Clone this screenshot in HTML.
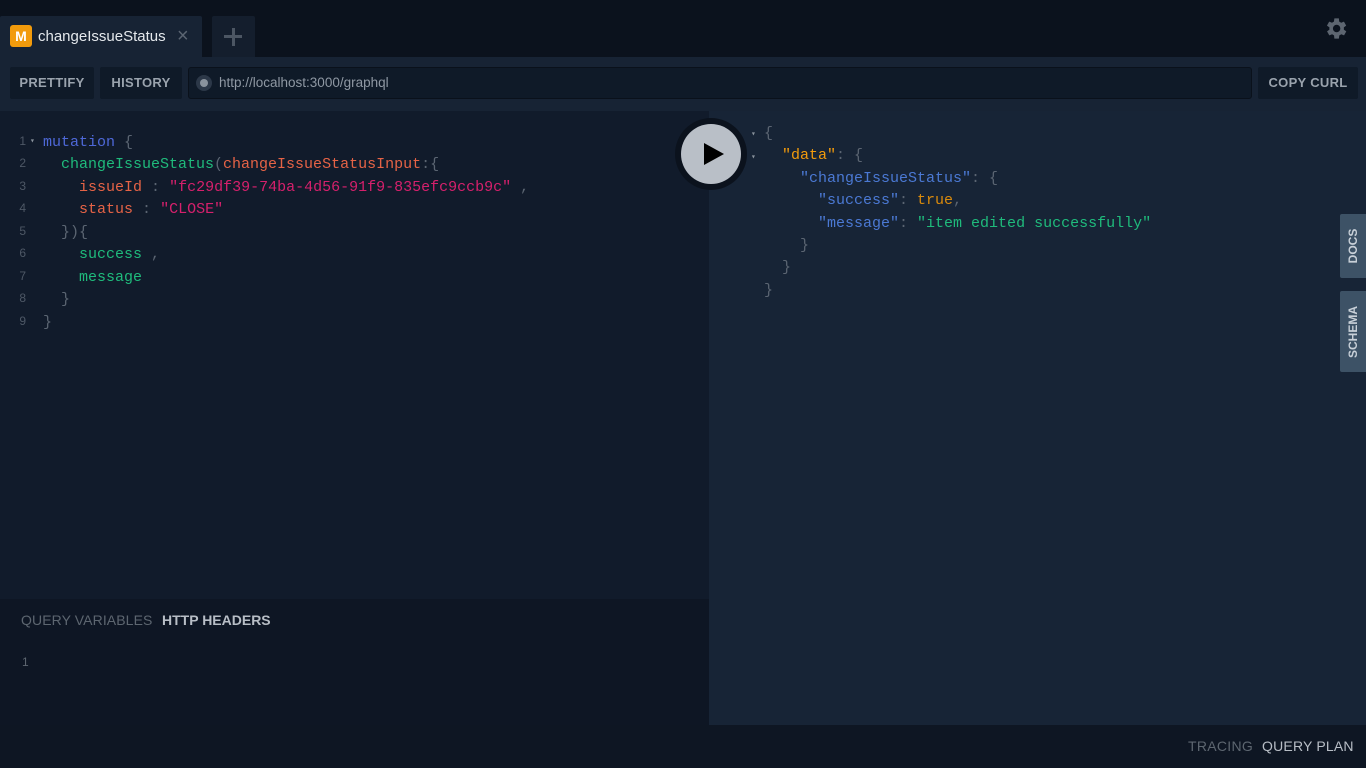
<!DOCTYPE html>
<html><head><meta charset="utf-8"><style>
*{margin:0;padding:0;box-sizing:border-box}
body{width:1366px;height:768px;overflow:hidden;background:#0b121d;font-family:"Liberation Sans",sans-serif;position:relative}
.abs{position:absolute}
.mono{font-family:"Liberation Mono",monospace;font-size:15px}
.btn{position:absolute;top:67px;height:32px;background:#0f1a28;border-radius:2px;color:#9aa3ad;font-weight:bold;font-size:13px;letter-spacing:.3px;line-height:32px;text-align:center}
.ln{position:absolute;left:8px;width:18px;text-align:right;color:#4e5866;font-size:12px;font-family:"Liberation Sans",sans-serif}
.cl{position:absolute;white-space:pre}
.side{position:absolute;left:1340px;width:26px;background:#3d5266;border-radius:2px 0 0 2px;color:#c8d0d8;font-size:12px;font-weight:bold}
.side span{position:absolute;left:50%;top:50%;transform:translate(-50%,-50%) rotate(-90deg);white-space:nowrap}
</style></head><body>
<div class="abs" style="left:0;top:16px;width:202px;height:42px;background:#172334;border-radius:2px 2px 0 0"></div>
<div class="abs" style="left:10px;top:25px;width:22px;height:22px;background:#f29b0c;border-radius:3px;color:#fff;font-weight:bold;font-size:14px;text-align:center;line-height:22px">M</div>
<div class="abs" style="left:38px;top:28px;color:#e4e8ec;font-size:15px">changeIssueStatus</div>
<div class="abs" style="left:177px;top:25px;color:#5b6572;font-size:20px">×</div>
<div class="abs" style="left:212px;top:16px;width:43px;height:42px;background:#141e2d;border-radius:2px 2px 0 0"></div>
<div class="abs" style="left:224px;top:35px;width:18px;height:3px;background:#4c5663"></div>
<div class="abs" style="left:231.5px;top:28px;width:3px;height:18px;background:#4c5663"></div>
<svg class="abs" style="left:1322px;top:15px" width="27" height="27" viewBox="0 0 24 24"><path fill="#5d6570" d="M19.4 13a7.6 7.6 0 0 0 0-2l2.1-1.6-2-3.5-2.5 1a7.3 7.3 0 0 0-1.7-1L15 3h-4l-.4 2.9a7.3 7.3 0 0 0-1.7 1l-2.5-1-2 3.5L6.6 11a7.6 7.6 0 0 0 0 2l-2.1 1.6 2 3.5 2.5-1a7.3 7.3 0 0 0 1.7 1L11 21h4l.4-2.9a7.3 7.3 0 0 0 1.7-1l2.5 1 2-3.5zM13 15.3A3.3 3.3 0 1 1 13 8.7a3.3 3.3 0 0 1 0 6.6z"/></svg>
<div class="abs" style="left:0;top:57px;width:1366px;height:54px;background:#172334"></div>
<div class="btn" style="left:10px;width:84px">PRETTIFY</div>
<div class="btn" style="left:100px;width:82px">HISTORY</div>
<div class="abs" style="left:188px;top:67px;width:1064px;height:32px;background:#0f1a28;border:1px solid #0a111b;border-radius:3px"></div>
<div class="abs" style="left:196px;top:75px;width:16px;height:16px;border-radius:50%;background:#2c3848"></div>
<div class="abs" style="left:200px;top:79px;width:8px;height:8px;border-radius:50%;background:#8a939d"></div>
<div class="abs" style="left:219px;top:75px;color:#8f98a3;font-size:13.5px">http://localhost:3000/graphql</div>
<div class="btn" style="left:1258px;width:100px">COPY CURL</div>
<div class="abs" style="left:0;top:111px;width:709px;height:488px;background:#111b2b"></div>
<div class="abs" style="left:709px;top:111px;width:657px;height:614px;background:#172436"></div>
<div class="abs" style="left:0;top:599px;width:709px;height:126px;background:#0e1624"></div>
<div class="abs" style="left:0;top:725px;width:1366px;height:43px;background:#0e1623"></div>
<div class="mono">
<div class="ln" style="top:134px">1</div><div class="ln" style="top:156px">2</div><div class="ln" style="top:179px">3</div><div class="ln" style="top:201px">4</div><div class="ln" style="top:224px">5</div><div class="ln" style="top:246px">6</div><div class="ln" style="top:269px">7</div><div class="ln" style="top:291px">8</div><div class="ln" style="top:314px">9</div>
<div class="cl" style="left:30px;top:136px;color:#8a939d;font-size:8px">▾</div>
<div class="cl" style="left:43px;top:134px;color:#4e68d8">mutation <span style="color:#5b6572">{</span></div>
<div class="cl" style="left:43px;top:156px;color:#1fbb7c">  changeIssueStatus<span style="color:#5b6572">(</span><span style="color:#e66346">changeIssueStatusInput</span><span style="color:#5b6572">:{</span></div>
<div class="cl" style="left:43px;top:179px;color:#e66346">    issueId <span style="color:#5b6572">:</span> <span style="color:#d6206c">"fc29df39-74ba-4d56-91f9-835efc9ccb9c"</span> <span style="color:#5b6572">,</span></div>
<div class="cl" style="left:43px;top:201px;color:#e66346">    status <span style="color:#5b6572">:</span> <span style="color:#d6206c">"CLOSE"</span></div>
<div class="cl" style="left:43px;top:224px;color:#5b6572">  }){</div>
<div class="cl" style="left:43px;top:246px;color:#1fbb7c">    success <span style="color:#5b6572">,</span></div>
<div class="cl" style="left:43px;top:269px;color:#1fbb7c">    message</div>
<div class="cl" style="left:43px;top:291px;color:#5b6572">  }</div>
<div class="cl" style="left:43px;top:314px;color:#5b6572">}</div>
<div class="cl" style="left:751px;top:129px;color:#8a939d;font-size:8px">▾</div>
<div class="cl" style="left:751px;top:152px;color:#8a939d;font-size:8px">▾</div>
<div class="cl" style="left:764px;top:125px;color:#5b6572">{</div>
<div class="cl" style="left:764px;top:147px;color:#5b6572">  <span style="color:#f29b0c">"data"</span>: {</div>
<div class="cl" style="left:764px;top:170px;color:#5b6572">    <span style="color:#4b79d4">"changeIssueStatus"</span>: {</div>
<div class="cl" style="left:764px;top:192px;color:#5b6572">      <span style="color:#4b79d4">"success"</span>: <span style="color:#d98a0c">true</span>,</div>
<div class="cl" style="left:764px;top:215px;color:#5b6572">      <span style="color:#4b79d4">"message"</span>: <span style="color:#1fbb7c">"item edited successfully"</span></div>
<div class="cl" style="left:764px;top:237px;color:#5b6572">    }</div>
<div class="cl" style="left:764px;top:259px;color:#5b6572">  }</div>
<div class="cl" style="left:764px;top:282px;color:#5b6572">}</div>
</div>
<div class="abs" style="left:675px;top:118px;width:72px;height:72px;border-radius:50%;background:#0b121d"></div>
<div class="abs" style="left:681px;top:124px;width:60px;height:60px;border-radius:50%;background:#b9bfc7"></div>
<svg class="abs" style="left:704px;top:143px" width="20" height="22"><path d="M0 0L20 11L0 22Z" fill="#000"/></svg>
<div class="side" style="top:214px;height:64px"><span>DOCS</span></div>
<div class="side" style="top:291px;height:81px"><span>SCHEMA</span></div>
<div class="abs" style="left:21px;top:612px;color:#5d6670;font-size:14px;letter-spacing:.1px">QUERY VARIABLES</div>
<div class="abs" style="left:162px;top:612px;color:#b8bec6;font-size:14px;font-weight:bold;letter-spacing:0">HTTP HEADERS</div>
<div class="abs" style="left:22px;top:655px;color:#5d6670;font-size:12px">1</div>
<div class="abs" style="left:1188px;top:738px;color:#5d6670;font-size:14px;letter-spacing:.3px">TRACING</div>
<div class="abs" style="left:1262px;top:738px;color:#b8bec6;font-size:14px;letter-spacing:.2px">QUERY PLAN</div>
</body></html>
